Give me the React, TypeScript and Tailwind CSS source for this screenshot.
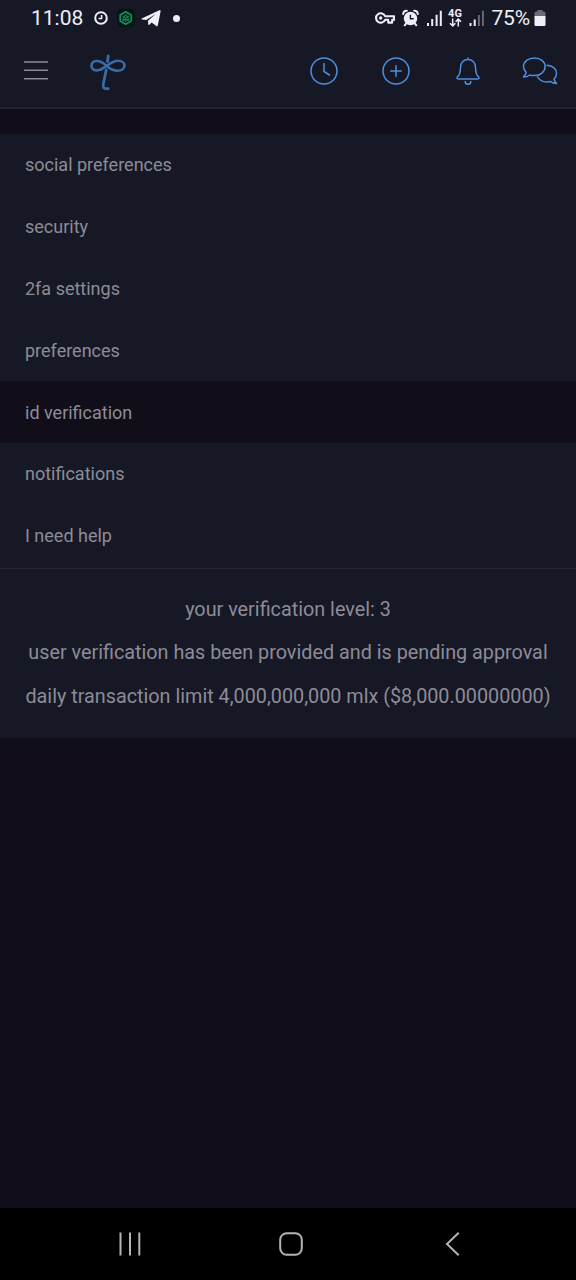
import clsx from "clsx";

const MENU_ITEMS = [
    "social preferences",
    "security",
    "2fa settings",
    "preferences",
    "id verification",
    "notifications",
    "I need help",
];

const ACTIVE_ITEM = "id verification";

function StatusBar() {
    return (
        <div className="flex h-9 items-center pl-[31px] pr-[30.5px] text-[#eeeef8]">
            <span className="w-[63px] text-[21px] leading-9 whitespace-nowrap">11:08</span>
            {/* Notification icons */}
            <svg className="h-4 w-[14px]" viewBox="0 0 14 16" fill="none" stroke="currentColor" strokeWidth="2">
                <circle cx="7" cy="8" r="5.8" />
                <path d="M7.6 5v3.6H4.6" strokeWidth="1.5" />
            </svg>
            <svg className="ml-2 h-5 w-5" viewBox="0 0 20 20" fill="none" stroke="#129060" strokeLinejoin="round">
                <rect x="1" y="0.5" width="18" height="19" rx="5" fill="#051712" stroke="none" />
                <path d="M9.7 3.8l5.5 3.1v6.2l-5.500 3.100-5.500-3.100V6.900z" strokeWidth="1.700" />
                <path d="M9.700 6.300l3.200 5.500H6.500zM6.300 8l3.400 1.800L13.100 8M9.700 10v4M6 13.200l3.700-2.300 3.700 2.300" strokeWidth="1" />
            </svg>
            <svg className="ml-[5px] h-[18px] w-5" viewBox="0 0 20 18" fill="currentColor">
                <path d="M.7 9.600L18.300 1.300c.9-.4 1.500 0 1.300.9L16.800 16.400c-.2.9-.8 1.100-1.500.6l-4.700-3.400-2.200 2.200c-.6.5-1.100.4-1.200-.5L7 11.800l7.700-6.900-9.500 6L.9 10.500c-.5-.2-.6-.6-.2-.9z" />
            </svg>
            <span className="ml-3 size-[7px] rounded-full bg-[#eeeef8]" />
            <div className="flex-1" />
            {/* System icons */}
            <svg className="h-4 w-5" viewBox="0 0 20 16" fill="none" stroke="currentColor" strokeWidth="2.1" strokeLinejoin="round">
                <path d="M10.1 6.200A4.700 4.700 0 1 0 10.100 9.800H13.200V12.600H17.200V9.800H19.100V6.200z" />
                <circle cx="5.700" cy="8" r="1.700" fill="currentColor" stroke="none" />
            </svg>
            <svg className="ml-[7px] h-[18px] w-[17px]" viewBox="0 0 17 18" fill="none">
                <circle cx="8.500" cy="9.500" r="6.700" fill="currentColor" />
                <path d="M1.200 5C1.400 3 2.800 1.700 4.800 1.800M15.800 5C15.600 3 14.200 1.700 12.200 1.800M4.200 14.300l-1.500 2M12.800 14.300l1.500 2" stroke="currentColor" strokeWidth="2" strokeLinecap="round" />
                <path d="M8.400 5.700v4h3.300" stroke="#171826" strokeWidth="1.400" />
            </svg>
            <svg className="ml-[7px] h-[18px] w-[17px]" viewBox="0 0 17 18" fill="currentColor">
                <path d="M1 14h2v3H1zM5.200 10h2v7h-2zM9.600 5.800h2V17h-2zM13.800 1.800h2V17h-2z" />
            </svg>
            <div className="ml-[5px] flex w-[15px] flex-col items-center">
                <span className="text-[11px] leading-[9px] font-bold">4G</span>
                <svg className="h-[9px] w-[13px]" viewBox="0 0 13 9" fill="none" stroke="currentColor" strokeWidth="1.500">
                    <path d="M3.700 0.500v7.300M1 5.200l2.700 2.700L6.400 5.200M9.300 8.500V1.200M6.600 3.800l2.700-2.700L12 3.800" />
                </svg>
            </div>
            <svg className="ml-[6px] h-[18px] w-[16px]" viewBox="0 0 16 18" fill="currentColor">
                <path d="M.5 14h2v3h-2zM4.700 10.500h2V17h-2z" />
                <path d="M9 6h1.800v11H9zM13 1.800h1.800V17H13z" opacity="0.400" />
            </svg>
            <span className="ml-[7px] w-[41px] text-[21px] leading-9 tracking-[-0.2px] whitespace-nowrap">75%</span>
            <svg className="ml-px h-[18px] w-3" viewBox="0 0 12 18">
                <path d="M3.500 1h5v1.500H10A1.500 1.500 0 0 1 11.500 4v3H.5V4A1.500 1.500 0 0 1 2 2.500h1.500z" fill="#6c6c78" />
                <path d="M.5 7h11v8.800a1.200 1.200 0 0 1-1.200 1.200H1.700A1.200 1.200 0 0 1 .5 15.800z" fill="currentColor" />
            </svg>
        </div>
    );
}

function Header() {
    return (
        <header className="flex h-[69px] items-center text-[#4b8fdd]">
            <button className="flex w-[72px] justify-center" aria-label="Menu">
                <svg className="size-6 text-[#8c8c98]" viewBox="0 0 24 24" stroke="currentColor" strokeWidth="1.500">
                    <path d="M0 3h24M0 11.300h24M0 19.800h24" />
                </svg>
            </button>
            <div className="flex w-[72px] justify-center">
                <svg className="h-10 w-9" viewBox="0 0 36 40" fill="none" stroke="#366da8" strokeLinecap="round">
                    <path d="M16.700 15C13 11.500 9.500 9.800 6.500 10 3 10.300 1.400 12.600 1.500 15c.2 3.300 3.300 4.800 6.500 4.300 4-.6 6-2.800 8.700-4.300C20 12.500 23.500 9.800 28 9.800c4 0 6.500 2.200 6.500 4.700 0 3-3 5.200-7 5.200-4.500 0-7.500-1.700-10.800-4.700z" strokeWidth="2.600" />
                    <path d="M18.200 5L17.500 10.500M16.200 19L13.500 32C12.600 36.500 13.200 38 18.300 37.700" strokeWidth="2.800" />
                </svg>
            </div>
            <div className="flex-1" />
            <button className="flex w-[72px] justify-center" aria-label="History">
                <svg className="size-7" viewBox="0 0 28 28" fill="none" stroke="currentColor" strokeWidth="1.500" strokeLinecap="round">
                    <circle cx="14" cy="14" r="13" />
                    <path d="M14 6.500V14.500L19.500 18" />
                </svg>
            </button>
            <button className="flex w-[72px] justify-center" aria-label="Add">
                <svg className="size-7" viewBox="0 0 28 28" fill="none" stroke="currentColor" strokeWidth="1.500" strokeLinecap="round">
                    <circle cx="14" cy="14" r="13" />
                    <path d="M14 8.700v10.600M8.700 14h10.600" />
                </svg>
            </button>
            <button className="flex w-[72px] justify-center" aria-label="Notifications">
                <svg className="h-7 w-6" viewBox="0 0 24 28" fill="none" stroke="currentColor" strokeWidth="1.500" strokeLinecap="round" strokeLinejoin="round">
                    <path d="M12 .9v1.500M12 2.500C7.500 2.500 4.500 5.700 4.500 10.200c0 4.500-.6 7.400-3 9.500-1 .9-.6 2.200.7 2.200h19.600c1.300 0 1.700-1.300.7-2.200-2.400-2.100-3-5-3-9.500C19.500 5.700 16.500 2.500 12 2.500z" />
                    <path d="M9.200 24.500a2.800 2.800 0 0 0 5.600 0" />
                </svg>
            </button>
            <button className="flex w-[72px] justify-center" aria-label="Messages">
                <svg className="h-7 w-9" viewBox="0 0 36 28" fill="none" stroke="currentColor" strokeWidth="1.500" strokeLinecap="round" strokeLinejoin="round">
                    <path d="M12.300 1C6.200 1 1.500 4.600 1.500 9.600c0 2.300 1 4.200 2.700 5.800-.3 1.700-1.200 3.200-2.700 4.600 2.500 0 4.600-.7 6.200-2 1.400.4 3 .6 4.600.6 6.100 0 10.800-3.800 10.800-9S18.400 1 12.300 1z" />
                    <path d="M25 8.200c5.400.3 9.500 3.600 9.500 8.200 0 2.200-.9 4.100-2.500 5.600.3 1.600 1.200 3.200 2.500 4.600-2.400-.1-4.300-.8-5.800-2-5.500 1.400-11-.5-13.200-4.600" />
                </svg>
            </button>
        </header>
    );
}

function SettingsMenu() {
    return (
        <nav className="pb-px">
            {MENU_ITEMS.map((item) => (
                <a
                    key={item}
                    className={clsx(
                        "flex h-[61.8px] items-center pl-[25px] text-[18px]",
                        item === ACTIVE_ITEM && "bg-[#110e1a]",
                    )}
                >
                    {item}
                </a>
            ))}
        </nav>
    );
}

function NavigationBar() {
    return (
        <div className="flex h-[72px] items-center bg-black pl-[118px] text-[#b4b4b4]">
            <svg className="h-6 w-6" viewBox="0 0 24 24" stroke="currentColor" strokeWidth="2">
                <path d="M2.500 .5v23M12 .5v23M21.300 .5v23" />
            </svg>
            <svg className="ml-[137px] size-6" viewBox="0 0 24 24" fill="none" stroke="currentColor" strokeWidth="2">
                <rect x="1.200" y="1.200" width="21.600" height="21.600" rx="6.500" />
            </svg>
            <svg className="ml-[141px] h-6 w-4" viewBox="0 0 16 24" fill="none" stroke="currentColor" strokeWidth="2">
                <path d="M14.700 .8L3 12L14.700 23.200" />
            </svg>
        </div>
    );
}

export default function App() {
    return (
        <div className="flex h-[1280px] w-[576px] flex-col overflow-hidden bg-[#110e1a] font-['Roboto',sans-serif] text-[#8c8c97]">
            <div className="h-[109px] border-b-2 border-[#25252f] bg-[#171826]">
                <StatusBar />
                <Header />
            </div>
            <main className="flex-1 pt-[26px]">
                <div className="-mt-px h-[604px] bg-[#171826]">
                    <SettingsMenu />
                    <section className="flex flex-col items-center border-t border-[#232531] pt-[19px] text-[19.8px] leading-[43.5px] whitespace-nowrap">
                        <p>your verification level: 3</p>
                        <p>user verification has been provided and is pending approval</p>
                        <p>daily transaction limit 4,000,000,000 mlx ($8,000.00000000)</p>
                    </section>
                </div>
            </main>
            <NavigationBar />
        </div>
    );
}
